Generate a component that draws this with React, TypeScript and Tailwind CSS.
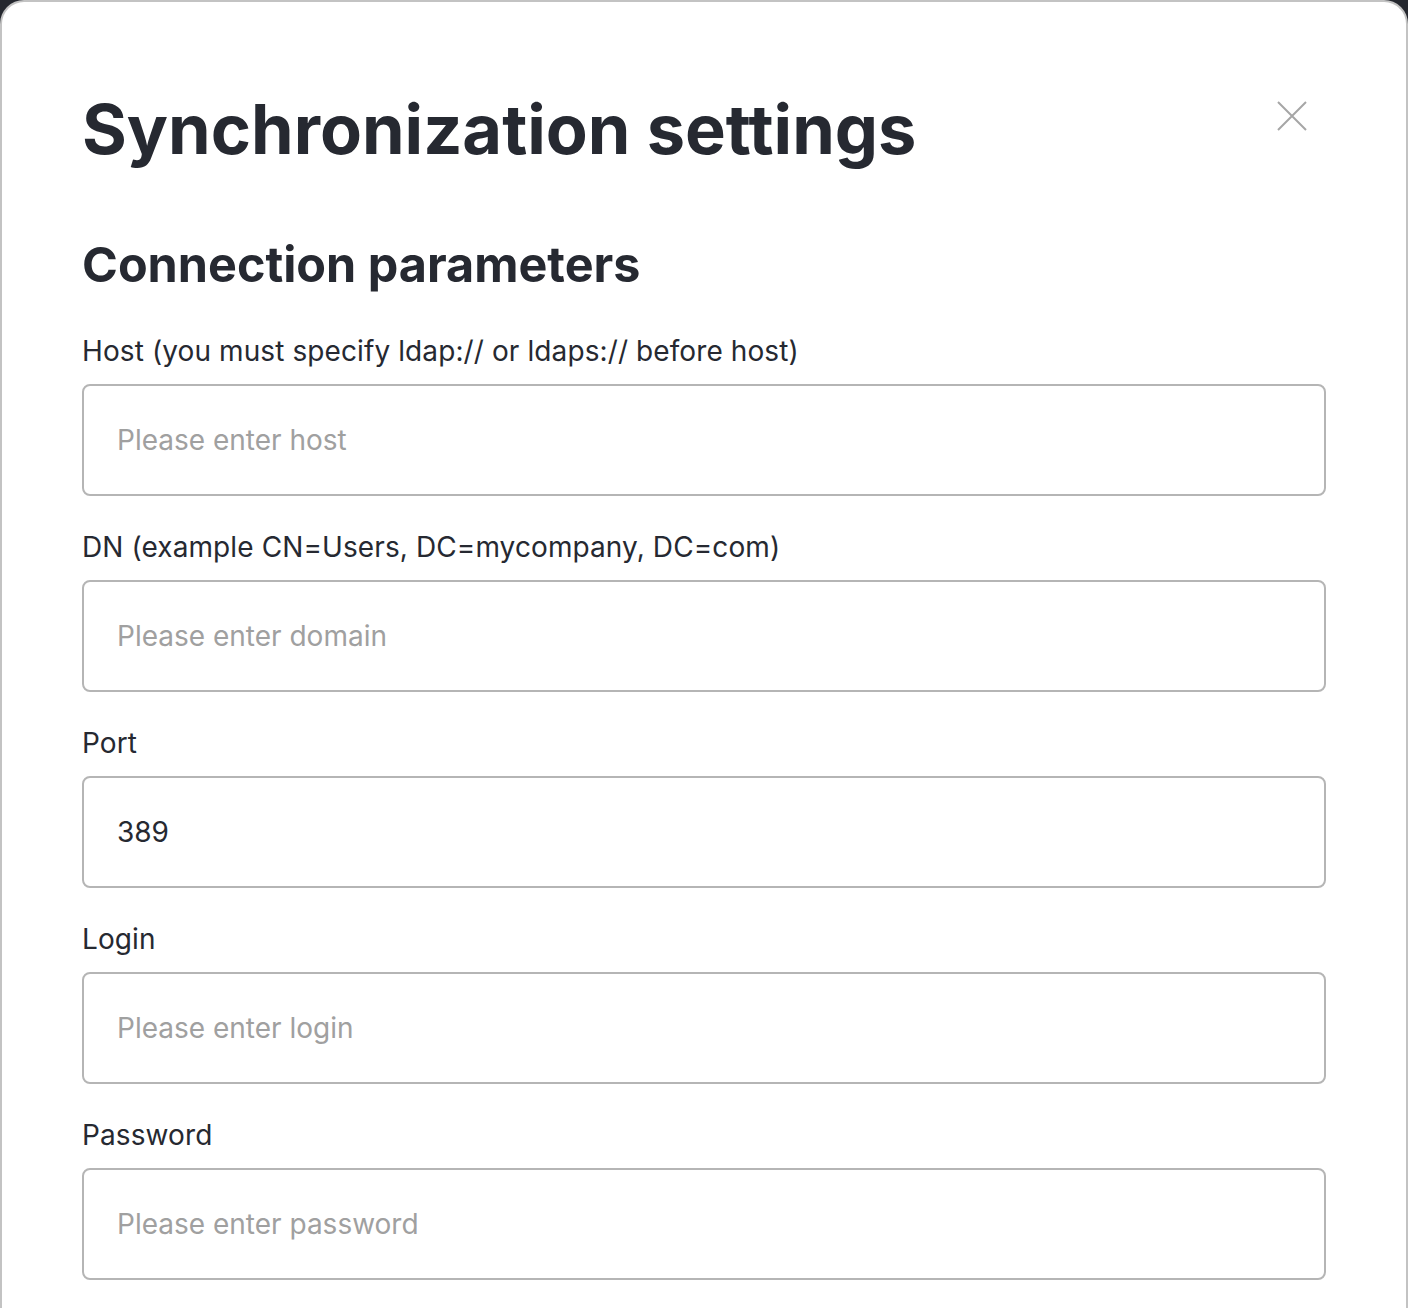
const fields = [
  { label: "Host (you must specify ldap:// or ldaps:// before host)", placeholder: "Please enter host" },
  { label: "DN (example CN=Users, DC=mycompany, DC=com)", placeholder: "Please enter domain" },
  { label: "Port", placeholder: "", value: "389" },
  { label: "Login", placeholder: "Please enter login" },
  { label: "Password", placeholder: "Please enter password" },
];

export default function App() {
  return (
    <div className="min-h-[1308px] bg-[#25282f] font-['Inter',sans-serif] text-[#262931]">
      <div className="h-[1308px] overflow-hidden rounded-t-[24px] border-2 border-b-0 border-[#c3c3c3] bg-white pl-[80px] pr-[80px] pt-[88px]">
        {/* Header */}
        <div className="flex items-start justify-between">
          <h1 className="text-[68.5px] font-bold leading-[80px]">Synchronization settings</h1>
          <button className="mr-[19px] mt-[11px] text-[#a6a6a6]" aria-label="Close">
            <svg width="30" height="30" viewBox="0 0 30 30" fill="none" stroke="currentColor" strokeWidth="2">
              <path d="M1 1L29 29M29 1L1 29" />
            </svg>
          </button>
        </div>

        {/* Section */}
        <h2 className="mt-[67px] text-[48.5px] font-bold leading-[56px]">Connection parameters</h2>

        <div className="mt-[41px] flex flex-col gap-[34px]">
          {fields.map((f) => (
            <div key={f.label} className="flex flex-col gap-[16px]">
              <label className="text-[28px] leading-[34px] tracking-[0.1px]">{f.label}</label>
              <input
                className="h-[112px] w-full rounded-[8px] border-2 border-[#b5b5b5] px-[33px] text-[28px] text-[#262931] outline-none placeholder:text-[#a0a0a0]"
                placeholder={f.placeholder}
                defaultValue={f.value}
              />
            </div>
          ))}
        </div>
      </div>
    </div>
  );
}
